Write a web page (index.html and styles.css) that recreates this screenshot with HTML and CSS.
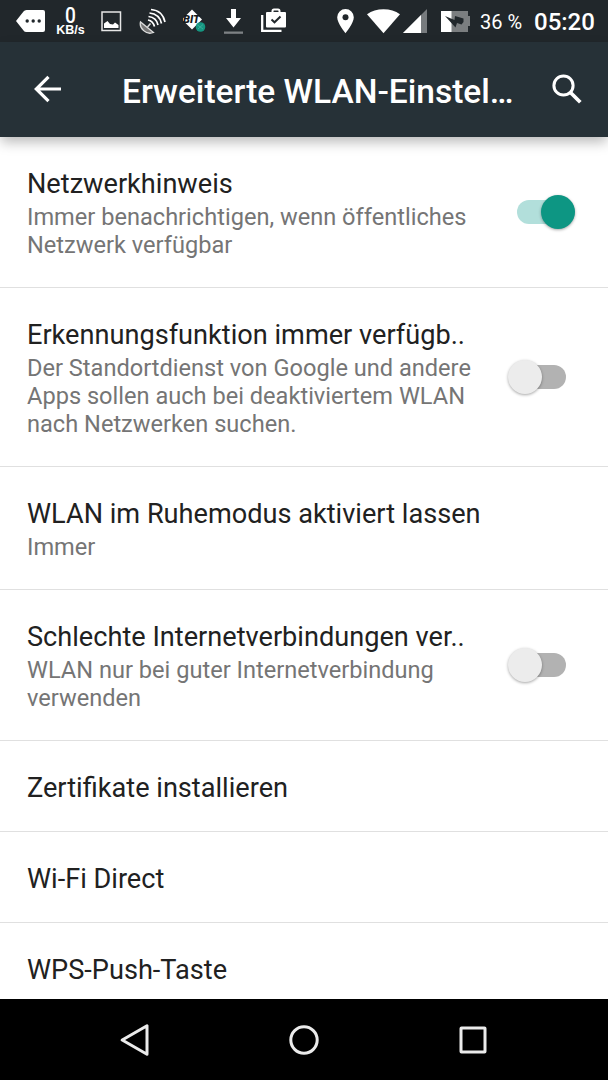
FILE: index.html
```html
<!DOCTYPE html>
<html lang="de">
<head>
  <meta charset="UTF-8" />
  <meta name="viewport" content="width=device-width, initial-scale=1" />
  <title>Erweiterte WLAN-Einstellungen</title>
  <link rel="stylesheet" href="styles.css">
</head>
<body>

  <div class="status-bar">
    <div class="status-left">
      <svg width="29" height="42" viewBox="0 0 29 42">
        <path d="M0 21 L7.5 11.5 Q8.5 10 10.5 10 H27 Q29 10 29 12 V30 Q29 32 27 32 H10.5 Q8.5 32 7.5 30.500 Z" fill="#fff" />
        <circle cx="11.200" cy="21" r="1.700" fill="#21272b" />
        <circle cx="17.200" cy="21" r="1.700" fill="#21272b" />
        <circle cx="23.200" cy="21" r="1.700" fill="#21272b" />
      </svg>
      <div class="net-speed">
        <span class="net-value">0</span>
        <span class="net-unit">KB/s</span>
      </div>
      <svg width="21" height="42" viewBox="0 0 21 42">
        <rect x="1" y="12" width="18.500" height="18.500" fill="none" stroke="#e6e6e6" stroke-width="1.500" />
        <path d="M3 28 V23.500 L6.500 21 L9 24 L12 24.500 L14 22.500 L17.500 25 V28 Z" fill="#fff" />
      </svg>
      <svg width="27" height="42" viewBox="0 0 27 42">
        <path d="M1.500 22 C0 28 7 35.500 14.500 32.500 Z" fill="#777" stroke="#ddd" stroke-width="1.300" />
        <path d="M8.500 27 L11.500 23.500" stroke="#ddd" stroke-width="1.500" />
        <g fill="none" stroke="#fff" stroke-width="1.700">
          <path d="M9 20 Q14 21 15.500 26.500" />
          <path d="M9.500 16.500 Q17.500 17.500 19 25" />
          <path d="M10.500 13 Q20.500 14 22.500 23.500" />
          <path d="M12 9.500 Q23.500 10.500 26 22" />
        </g>
      </svg>
      <div class="debug-icon">
        <svg width="24" height="42" viewBox="0 0 24 42">
          <path d="M9 9.500 L19 19.500 L9 29.500 L-1 19.500 Z" fill="#fff" />
          <circle cx="17.500" cy="27" r="4.800" fill="#159681" />
          <path d="M14.500 25 L20 29 M15 29 L20 24.500" stroke="#55b8a8" stroke-width="0.600" />
        </svg>
        <span class="debug-label">BIT</span>
      </div>
      <svg width="20" height="42" viewBox="0 0 20 42">
        <path d="M7 9 H12 V18 H17 L9.500 27.500 L2 18 H7 Z" fill="#fff" />
        <rect x="0" y="31.500" width="19" height="2.300" fill="#7d8184" />
      </svg>
      <svg width="26" height="42" viewBox="0 0 26 42">
        <path d="M1.200 15 V30.800 H20.500" fill="none" stroke="#fff" stroke-width="2.300" />
        <path d="M11.500 13 V11 Q11.500 9.500 13 9.500 H17 Q18.500 9.500 18.500 11 V13" fill="none" stroke="#fff" stroke-width="2" />
        <rect x="5" y="12" width="20" height="15.500" rx="1" fill="#fff" />
        <path d="M10.500 19.500 L13.500 22.300 L19.500 16.500" fill="none" stroke="#21272b" stroke-width="2" />
      </svg>
    </div>

    <div class="status-right">
      <svg width="17" height="42" viewBox="0 0 17 42">
        <path d="M8.500 9 A8.300 8.300 0 0 0 0.200 17.300 C0.200 23.500 8.500 33.200 8.500 33.200 C8.500 33.200 16.800 23.500 16.800 17.300 A8.300 8.300 0 0 0 8.500 9 Z" fill="#fff" />
        <circle cx="8.500" cy="17.300" r="3" fill="#21272b" />
      </svg>
      <svg class="wifi" width="33" height="42" viewBox="0 0 33 42">
        <path d="M16.500 33.200 L0 14.200 Q7 9.200 16.500 9.200 T33 14.200 Z" fill="#fff" />
      </svg>
      <svg class="signal" width="24" height="42" viewBox="0 0 24 42">
        <path d="M0 33 L24 9 V33 Z" fill="#777b7e" />
        <path d="M0 33 L18 15 V33 Z" fill="#fff" />
      </svg>
      <svg class="battery" width="29" height="42" viewBox="0 0 29 42">
        <path d="M0 11 H27 V16 H29 V26 H27 V32 H0 Z" fill="#7b7e80" />
        <rect x="0" y="11" width="10.500" height="21" fill="#fff" />
        <path d="M4 16 L13.500 20 L14 16 L22.500 18.500 V22 L20.500 24.500 L16 23 L14.500 27.500 Z" fill="#21272b" />
      </svg>
      <span class="percent">36&nbsp;%</span>
      <span class="clock">05:20</span>
    </div>
  </div>

  <header class="app-bar">
    <svg class="back" width="28" height="28" viewBox="0 0 28 28">
      <path d="M27 14 H3 M14.500 1.800 L2.300 14 L14.500 26.200" fill="none" stroke="#fff" stroke-width="3.200" />
    </svg>
    <h1>Erweiterte WLAN-Einstel…</h1>
    <svg class="search" width="30" height="30" viewBox="0 0 30 30">
      <circle cx="11.500" cy="11.500" r="9.600" fill="none" stroke="#fff" stroke-width="3" />
      <path d="M18.200 18.200 L28.300 28.300" stroke="#fff" stroke-width="3.700" />
    </svg>
  </header>

  <main class="settings">
    <div class="row">
      <div class="row-text">
        <div class="row-title">Netzwerkhinweis</div>
        <div class="row-desc">Immer benachrichtigen, wenn öffentliches<br>Netzwerk verfügbar</div>
      </div>
      <div class="switch on"><div class="thumb"></div></div>
    </div>
    <div class="row">
      <div class="row-text">
        <div class="row-title">Erkennungsfunktion immer verfügb..</div>
        <div class="row-desc">Der Standortdienst von Google und andere<br>Apps sollen auch bei deaktiviertem WLAN<br>nach Netzwerken suchen.</div>
      </div>
      <div class="switch"><div class="thumb"></div></div>
    </div>
    <div class="row">
      <div class="row-text">
        <div class="row-title">WLAN im Ruhemodus aktiviert lassen</div>
        <div class="row-desc">Immer</div>
      </div>
    </div>
    <div class="row">
      <div class="row-text">
        <div class="row-title">Schlechte Internetverbindungen ver..</div>
        <div class="row-desc">WLAN nur bei guter Internetverbindung<br>verwenden</div>
      </div>
      <div class="switch"><div class="thumb"></div></div>
    </div>
    <div class="row">
      <div class="row-title">Zertifikate installieren</div>
    </div>
    <div class="row">
      <div class="row-title">Wi-Fi Direct</div>
    </div>
    <div class="row">
      <div class="row-title">WPS-Push-Taste</div>
    </div>
  </main>

  <nav class="nav-bar">
    <svg width="32" height="32" viewBox="0 0 32 32">
      <path d="M28 1.800 V30.200 L3.200 16 Z" fill="none" stroke="#ebebeb" stroke-width="3" stroke-linejoin="round" />
    </svg>
    <svg width="32" height="32" viewBox="0 0 32 32">
      <circle cx="16" cy="16" r="13.200" fill="none" stroke="#ebebeb" stroke-width="3" />
    </svg>
    <svg width="32" height="32" viewBox="0 0 32 32">
      <rect x="4" y="4" width="24" height="24" rx="0.500" fill="none" stroke="#ebebeb" stroke-width="3" stroke-linejoin="round" />
    </svg>
  </nav>

</body>
</html>
```
FILE: styles.css
```css
* {
  box-sizing: border-box;
}
body {
  margin: 0;
  height: 1080px;
  display: flex;
  flex-direction: column;
  overflow: hidden;
  background: #fff;
  font-family: Roboto, sans-serif;
}
svg {
  display: block;
  flex: none;
}

/* Status bar */
.status-bar {
  height: 42px;
  flex: none;
  display: flex;
  justify-content: space-between;
  padding: 0 14px 0 16px;
  background: #21272b;
  color: #fff;
}
.status-left, .status-right {
  display: flex;
}
.status-left {
  gap: 17px;
}
.net-speed {
  width: 29px;
  margin: 0 -1px 0 -6px;
  padding-top: 6px;
  display: flex;
  flex-direction: column;
  align-items: center;
  white-space: nowrap;
}
.net-value {
  height: 18px;
  font-size: 22.5px;
  font-weight: 500;
  line-height: 18px;
  transform: scaleX(0.85);
}
.net-unit {
  font-family: "Liberation Sans", sans-serif;
  font-size: 12.5px;
  font-weight: bold;
  line-height: 13px;
}
.debug-icon {
  position: relative;
}
.debug-label {
  position: absolute;
  left: 0;
  top: 14px;
  color: #161a1c;
  font-size: 11px;
  font-style: italic;
  font-weight: 900;
  line-height: 12px;
}
.wifi {
  margin-left: 13px;
}
.signal {
  margin-left: 3px;
}
.battery {
  margin-left: 14px;
}
.percent {
  width: 43px;
  margin-left: 10px;
  font-size: 20px;
  line-height: 44px;
  white-space: nowrap;
}
.clock {
  width: 60px;
  margin-left: 11px;
  font-size: 24px;
  font-weight: 500;
  line-height: 44px;
}

/* App bar */
.app-bar {
  position: relative;
  height: 95px;
  flex: none;
  display: flex;
  align-items: center;
  padding: 0 26px 1px 34px;
  background: #263137;
  box-shadow: 0 6px 12px -1px rgba(0,0,0,0.28);
}
h1 {
  flex: 1;
  margin: 5px 0 0 60px;
  color: #fff;
  font-size: 33.5px;
  font-weight: 500;
  line-height: 40px;
  white-space: nowrap;
}

/* Settings list */
.settings {
  flex: 1;
  min-height: 0;
  overflow: hidden;
}
.row {
  display: flex;
  align-items: center;
  justify-content: space-between;
  padding: 31px 33px 27px 27px;
  border-bottom: 1px solid #e0e0e0;
}
.row-title {
  color: #212121;
  font-size: 27.15px;
  line-height: 32px;
  white-space: nowrap;
}
.row-desc {
  padding: 3px 0 1px;
  color: #757575;
  font-size: 23.6px;
  line-height: 28px;
  white-space: nowrap;
}

/* Switches */
.switch {
  width: 49px;
  height: 24px;
  flex: none;
  display: flex;
  align-items: center;
  margin: 0 9px 4px 0;
  border-radius: 12px;
  background: #b2b2b2;
}
.thumb {
  width: 34px;
  height: 34px;
  flex: none;
  margin-left: -9px;
  border-radius: 50%;
  background: #ececec;
  box-shadow: 0 1px 3px rgba(0,0,0,0.35);
}
.switch.on {
  width: 58px;
  justify-content: flex-end;
  margin-right: 0;
  background: #b2dfdb;
}
.switch.on .thumb {
  margin-left: 0;
  background: #0d9683;
}

/* Navigation bar */
.nav-bar {
  height: 81px;
  flex: none;
  display: flex;
  align-items: center;
  justify-content: space-between;
  padding: 0 119px;
  background: #000;
}
```
